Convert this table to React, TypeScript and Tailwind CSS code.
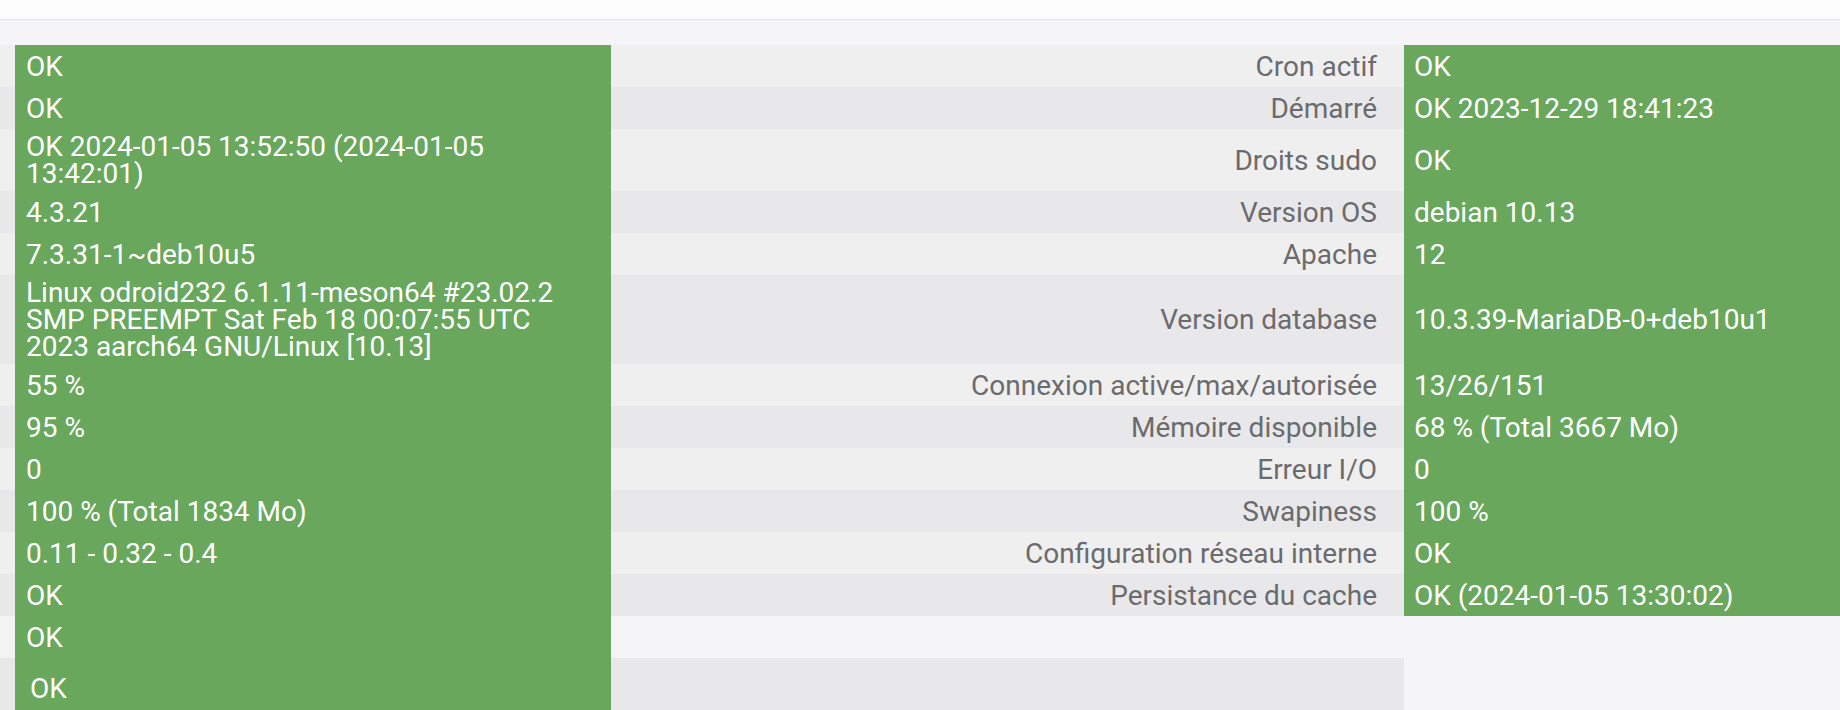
import React from "react";

type Row = { left: string; label: string; right: string };

// "\n" marks where the reference wraps the text
const rows: Row[] = [
  { left: "OK", label: "Cron actif", right: "OK" },
  { left: "OK", label: "Démarré", right: "OK 2023-12-29 18:41:23" },
  { left: "OK 2024-01-05 13:52:50 (2024-01-05\n13:42:01)", label: "Droits sudo", right: "OK" },
  { left: "4.3.21", label: "Version OS", right: "debian 10.13" },
  { left: "7.3.31-1~deb10u5", label: "Apache", right: "12" },
  {
    left: "Linux odroid232 6.1.11-meson64 #23.02.2\nSMP PREEMPT Sat Feb 18 00:07:55 UTC\n2023 aarch64 GNU/Linux [10.13]",
    label: "Version database",
    right: "10.3.39-MariaDB-0+deb10u1",
  },
  { left: "55 %", label: "Connexion active/max/autorisée", right: "13/26/151" },
  { left: "95 %", label: "Mémoire disponible", right: "68 % (Total 3667 Mo)" },
  { left: "0", label: "Erreur I/O", right: "0" },
  { left: "100 % (Total 1834 Mo)", label: "Swapiness", right: "100 %" },
  { left: "0.11 - 0.32 - 0.4", label: "Configuration réseau interne", right: "OK" },
  { left: "OK", label: "Persistance du cache", right: "OK (2024-01-05 13:30:02)" },
];

export default function App() {
  return (
    <div
      className="w-[1840px] h-[710px] overflow-hidden bg-[#f5f5f7] text-[28px] leading-[27px]"
      style={{ fontFamily: "Roboto, 'Liberation Sans', sans-serif" }}
    >
      <div className="h-[20px] bg-[#fcfcfc] border-b border-[#e4e4e6]" />
      <div className="h-[25px]" />

      {rows.map((r, i) => (
        <div
          key={i}
          className={`flex min-h-[42px] ${i % 2 === 0 ? "bg-[#efeff0]" : "bg-[#e8e8ea]"}`}
        >
          <div className="w-[15px] shrink-0" />
          <div className="w-[596px] shrink-0 bg-[#68a75c] text-white pl-[11px] py-[4px] flex items-center whitespace-pre-line">
            {r.left}
          </div>
          <div className="flex-1 flex items-center justify-end pr-[27px] text-[#6b6b6d]">
            {r.label}
          </div>
          <div className="w-[436px] shrink-0 bg-[#68a75c] text-white pl-[10px] flex items-center">
            {r.right}
          </div>
        </div>
      ))}

      <div className="flex h-[42px]">
        <div className="w-[15px] shrink-0 bg-[#f3f3f5]" />
        <div className="w-[596px] shrink-0 bg-[#68a75c] text-white pl-[11px] flex items-center">
          OK
        </div>
      </div>

      <div className="flex h-[60px]">
        <div className="w-[15px] shrink-0 bg-[#e8e8ea]" />
        <div className="w-[596px] shrink-0 bg-[#68a75c] text-white pl-[15px] pt-[17px]">
          OK
        </div>
        <div className="w-[793px] shrink-0 bg-[#e8e8ea]" />
      </div>
    </div>
  );
}
